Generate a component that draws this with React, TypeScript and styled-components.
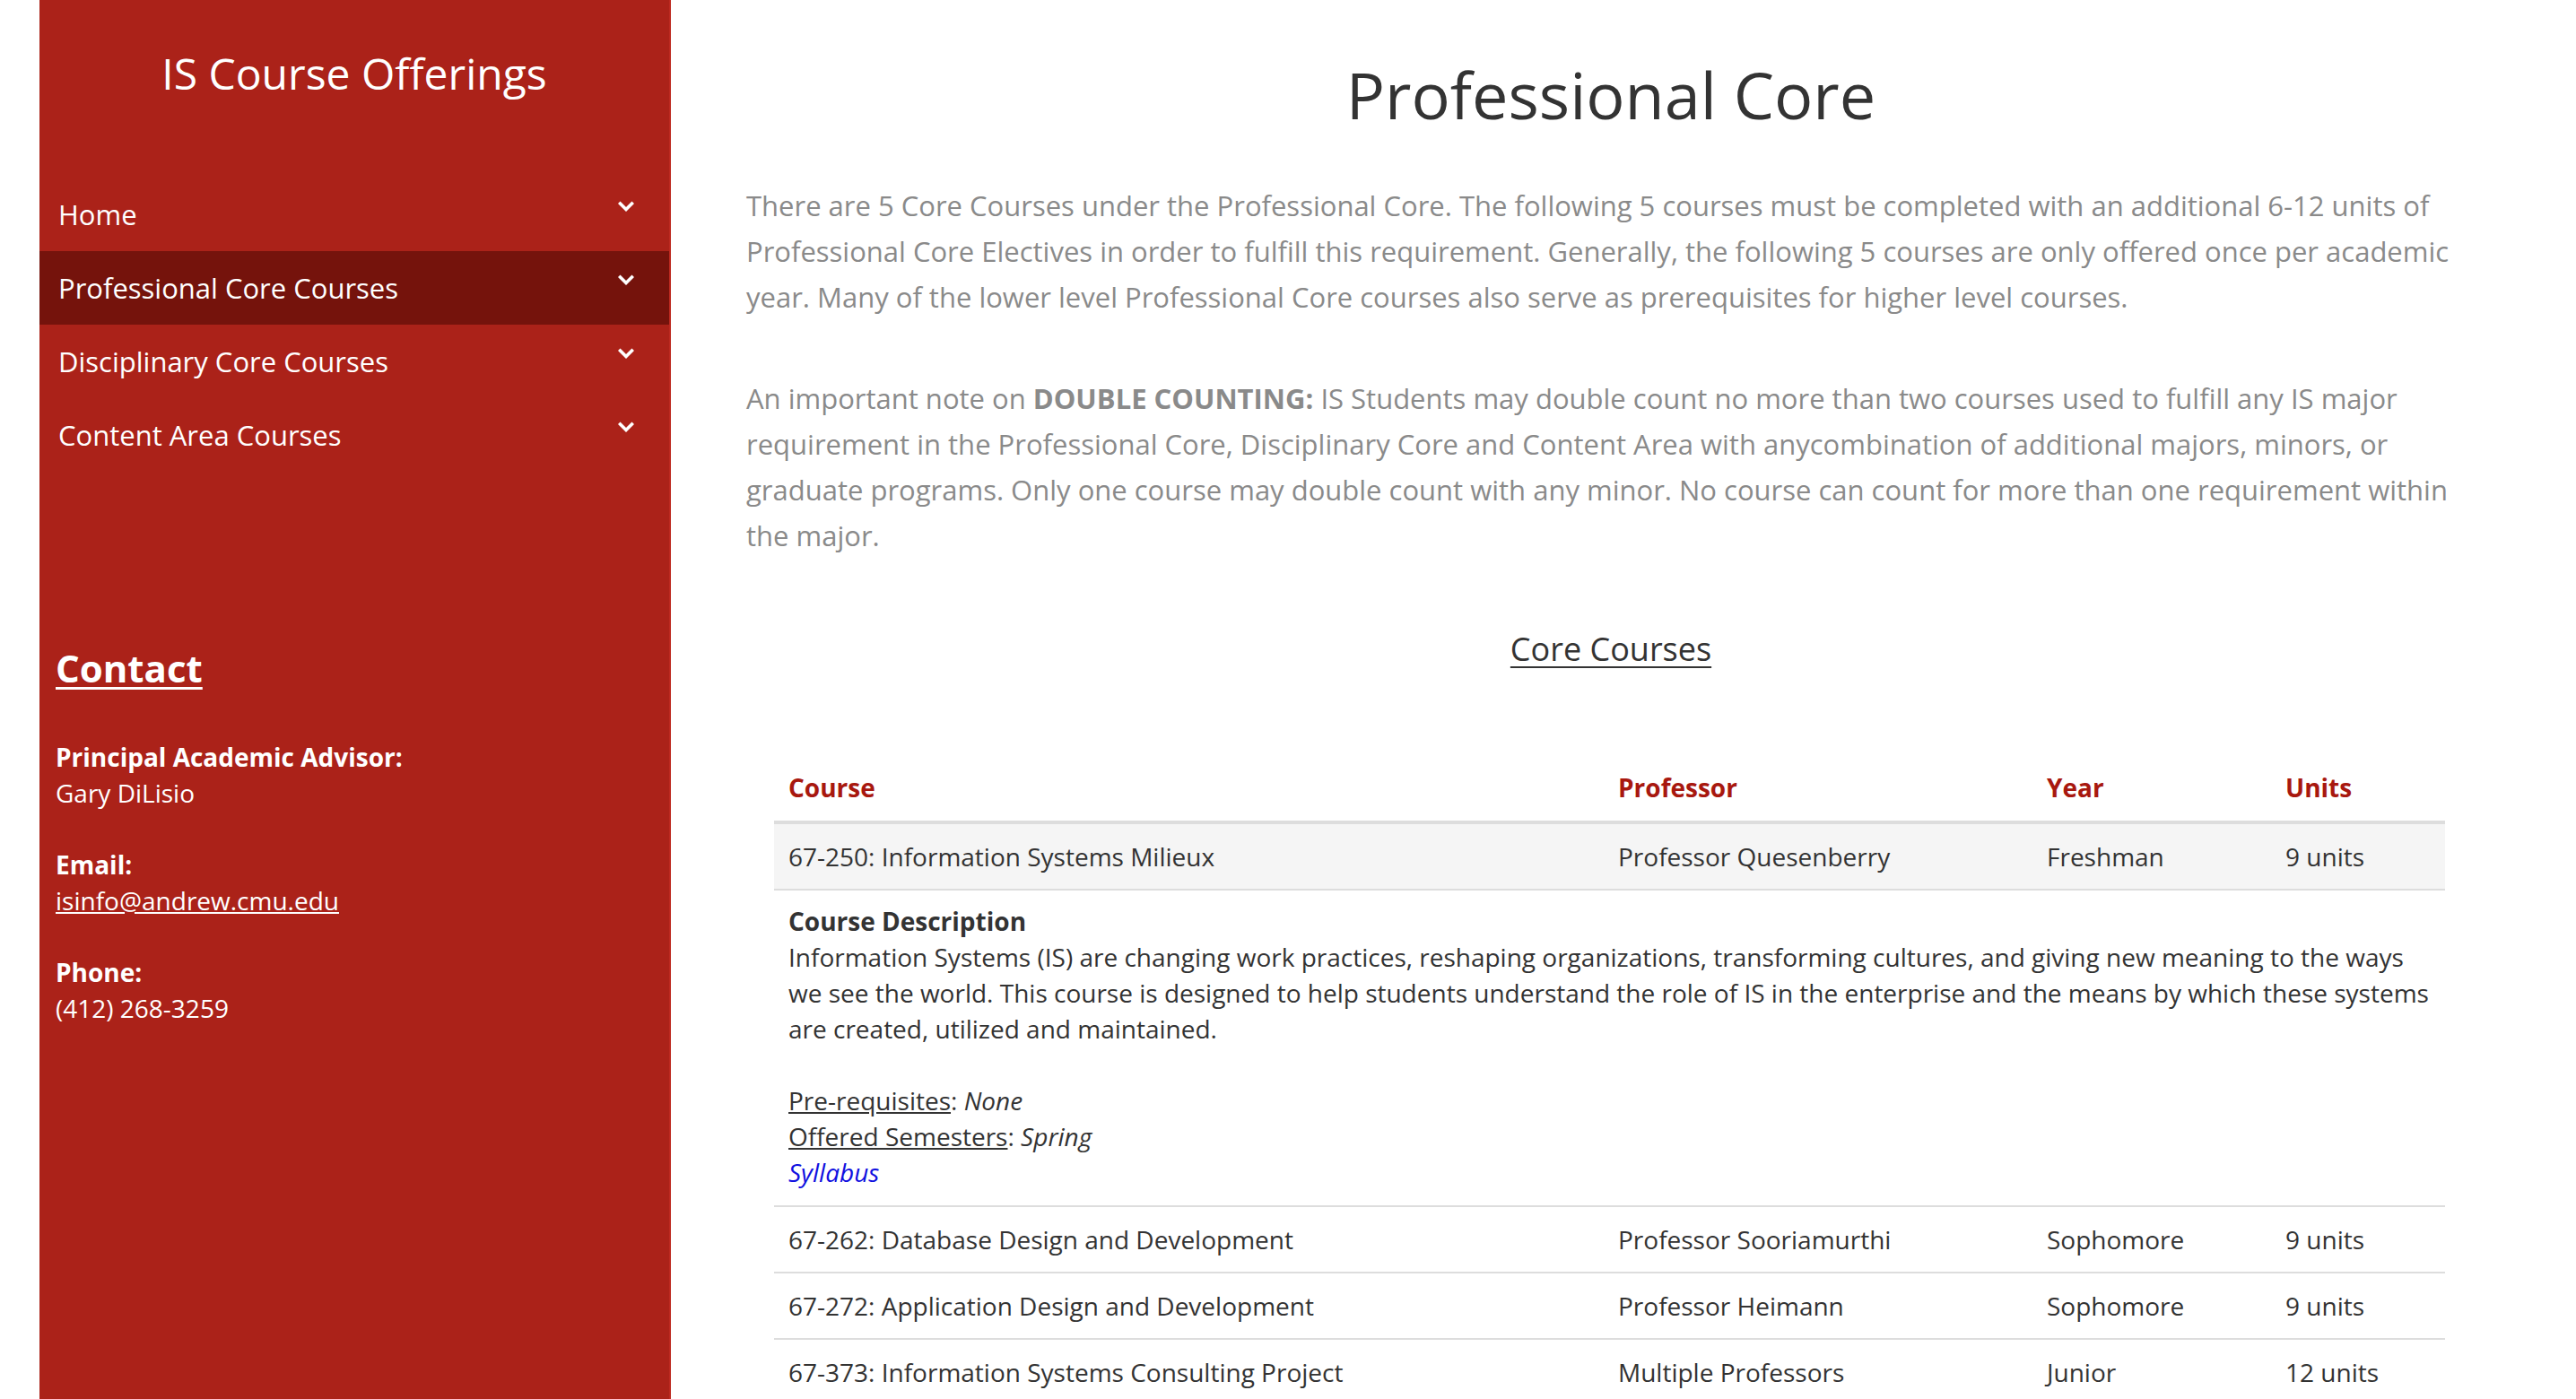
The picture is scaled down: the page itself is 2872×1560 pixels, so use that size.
import styled, { createGlobalStyle } from "styled-components";

const GlobalStyle = createGlobalStyle`
html { scrollbar-width: none; }
html::-webkit-scrollbar, body::-webkit-scrollbar { display: none; }
body {
    margin: 0;
    background: #fff;
    font-family: "Open Sans", "Liberation Sans", sans-serif;
}
* { box-sizing: border-box; }
`;

const Page = styled.div`
display: flex;
align-items: stretch;
min-height: 100vh;
padding-left: 44px;
`;

const Sidebar = styled.aside`
flex: 0 0 704px;
display: flex;
flex-direction: column;
background: #ab2219;
border-right: 2px solid #bd2a20;
color: #fff;
`;

const Brand = styled.h1`
margin: 0;
padding-top: 49px;
font-size: 48px;
line-height: 66px;
font-weight: 400;
text-align: center;
`;

const Nav = styled.nav`
margin-top: 83px;
display: flex;
flex-direction: column;
`;

const NavItem = styled.a<{ $active?: boolean }>`
display: flex;
justify-content: space-between;
align-items: center;
height: 82px;
padding: 0 39px 0 21px;
font-size: 31px;
color: #fff;
text-decoration: none;
background: ${(p) => (p.$active ? "#75130c" : "transparent")};
& svg {
    flex: 0 0 auto;
    align-self: flex-start;
    margin-top: 26px;
}
`;

const Contact = styled.section`
margin-top: 189px;
padding: 0 18px;
`;

const ContactTitle = styled.h2`
margin: 0 0 49px;
font-size: 42px;
line-height: 60px;
font-weight: 700;
text-decoration: underline;
text-decoration-thickness: 3px;
text-underline-offset: 5px;
`;

const ContactBlock = styled.p`
margin: 0 0 40px;
font-size: 28px;
line-height: 40px;
& strong { display: block; }
& a { color: #fff; }
`;

const Main = styled.main`
flex: 1;
padding: 0 112px 0 84px;
`;

const Title = styled.h1`
margin: 56px 0 0;
font-size: 72px;
line-height: 98px;
font-weight: 400;
text-align: center;
color: #333;
`;

const Intro = styled.p<{ $gap: number }>`
margin: ${(p) => p.$gap}px 0 0;
font-size: 31px;
line-height: 51px;
color: #8a8a8a;
& b { font-weight: 700; }
`;

const SectionTitle = styled.h3`
margin: 76px 0 0;
font-size: 36px;
line-height: 50px;
font-weight: 400;
text-align: center;
color: #333;
text-decoration: underline;
text-decoration-thickness: 2px;
text-underline-offset: 6px;
`;

const TableWrap = styled.div`
margin: 92px 34px 0 31px;
`;

const Table = styled.table`
width: 100%;
table-layout: fixed;
border-collapse: separate;
border-spacing: 0;
font-size: 28px;
line-height: 40px;
color: #333;
`;

const Th = styled.th`
padding: 17px 16px;
text-align: left;
font-weight: 700;
color: #a8180f;
border-bottom: 4px solid #dddddd;
`;

const Row = styled.tr<{ $shaded?: boolean }>`
background: ${(p) => (p.$shaded ? "#f5f5f5" : "transparent")};
`;

const Td = styled.td`
padding: 16px;
border-bottom: 2px solid #dddddd;
vertical-align: top;
white-space: nowrap;
`;

const DescCell = styled.td`
padding: 14px 6px 17px 16px;
border-bottom: 2px solid #dddddd;
`;

const DescPara = styled.p`
margin: 0 0 40px;
&:last-child { margin: 0; }
& strong { display: block; }
`;

const Underlined = styled.span`
text-decoration: underline;
`;

const Syllabus = styled.a`
font-style: italic;
color: #1010e0;
text-decoration: none;
`;

const Chevron = () => (
    <svg width="18" height="13" viewBox="0 0 18 13">
        <polyline points="2.5,3 9,9.5 15.5,3" fill="none" stroke="#fff" strokeWidth="3.6" strokeLinecap="square" />
    </svg>
);

const navLinks = [
    { label: "Home" },
    { label: "Professional Core Courses", active: true },
    { label: "Disciplinary Core Courses" },
    { label: "Content Area Courses" },
];

const courses = [
    { course: "67-262: Database Design and Development", prof: "Professor Sooriamurthi", year: "Sophomore", units: "9 units" },
    { course: "67-272: Application Design and Development", prof: "Professor Heimann", year: "Sophomore", units: "9 units" },
    { course: "67-373: Information Systems Consulting Project", prof: "Multiple Professors", year: "Junior", units: "12 units" },
];

const App = (): JSX.Element => {
    return (
        <>
            <GlobalStyle />
            <Page>
                <Sidebar>
                    <Brand>IS Course Offerings</Brand>
                    <Nav>
                        {navLinks.map(({ label, active }) => (
                            <NavItem key={label} href="#" $active={active}>
                                <span>{label}</span>
                                <Chevron />
                            </NavItem>
                        ))}
                    </Nav>
                    <Contact>
                        <ContactTitle>Contact</ContactTitle>
                        <ContactBlock>
                            <strong>Principal Academic Advisor:</strong>
                            Gary DiLisio
                        </ContactBlock>
                        <ContactBlock>
                            <strong>Email:</strong>
                            <a href="#">isinfo@andrew.cmu.edu</a>
                        </ContactBlock>
                        <ContactBlock>
                            <strong>Phone:</strong>
                            (412) 268-3259
                        </ContactBlock>
                    </Contact>
                </Sidebar>
                <Main>
                    <Title>Professional Core</Title>
                    <Intro $gap={50}>
                        There are 5 Core Courses under the Professional Core. The following 5 courses must be completed with an
                        additional 6-12 units of Professional Core Electives in order to fulfill this requirement. Generally, the
                        following 5 courses are only offered once per academic year. Many of the lower level Professional Core
                        courses also serve as prerequisites for higher level courses.
                    </Intro>
                    <Intro $gap={62}>
                        An important note on <b>DOUBLE COUNTING:</b> IS Students may double count no more than two courses used to
                        fulfill any IS major requirement in the Professional Core, Disciplinary Core and Content Area with
                        anycombination of additional majors, minors, or graduate programs. Only one course may double count with any
                        minor. No course can count for more than one requirement within the major.
                    </Intro>
                    <SectionTitle>Core Courses</SectionTitle>
                    <TableWrap>
                        <Table>
                            <colgroup>
                                <col style={{ width: 925 }} />
                                <col style={{ width: 478 }} />
                                <col style={{ width: 266 }} />
                                <col />
                            </colgroup>
                            <thead>
                                <tr>
                                    <Th>Course</Th>
                                    <Th>Professor</Th>
                                    <Th>Year</Th>
                                    <Th>Units</Th>
                                </tr>
                            </thead>
                            <tbody>
                                <Row $shaded>
                                    <Td>67-250: Information Systems Milieux</Td>
                                    <Td>Professor Quesenberry</Td>
                                    <Td>Freshman</Td>
                                    <Td>9 units</Td>
                                </Row>
                                <Row>
                                    <DescCell colSpan={4}>
                                        <DescPara>
                                            <strong>Course Description</strong>
                                            Information Systems (IS) are changing work practices, reshaping organizations,
                                            transforming cultures, and giving new meaning to the ways we see the world. This course
                                            is designed to help students understand the role of IS in the enterprise and the means by
                                            which these systems are created, utilized and maintained.
                                        </DescPara>
                                        <DescPara>
                                            <Underlined>Pre-requisites</Underlined>: <em>None</em>
                                            <br />
                                            <Underlined>Offered Semesters</Underlined>: <em>Spring</em>
                                            <br />
                                            <Syllabus href="#">Syllabus</Syllabus>
                                        </DescPara>
                                    </DescCell>
                                </Row>
                                {courses.map((c) => (
                                    <Row key={c.course}>
                                        <Td>{c.course}</Td>
                                        <Td>{c.prof}</Td>
                                        <Td>{c.year}</Td>
                                        <Td>{c.units}</Td>
                                    </Row>
                                ))}
                            </tbody>
                        </Table>
                    </TableWrap>
                </Main>
            </Page>
        </>
    );
};

export default App;
